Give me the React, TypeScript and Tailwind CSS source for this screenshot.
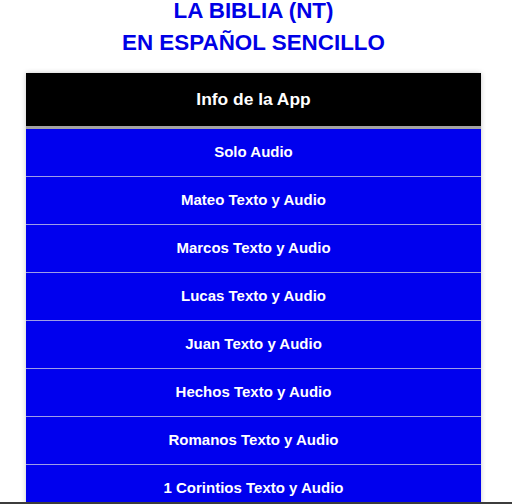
const items = [
  'Solo Audio',
  'Mateo Texto y Audio',
  'Marcos Texto y Audio',
  'Lucas Texto y Audio',
  'Juan Texto y Audio',
  'Hechos Texto y Audio',
  'Romanos Texto y Audio',
  '1 Corintios Texto y Audio',
  '2 Corintios Texto y Audio',
];

export default function App() {
  return (
    <div className="flex h-[504px] w-[512px] flex-col overflow-hidden bg-white font-['Liberation_Sans',Arial,sans-serif]">
      <div className="min-h-0 flex-1 overflow-hidden">
        <div className="w-[507px]">
          {/* título */}
          <h1 className="-mt-[5px] text-center text-[22.4px] font-bold leading-[32px] text-[#0000e6]">
            <div>LA BIBLIA (NT)</div>
            <div>EN ESPAÑOL SENCILLO</div>
          </h1>

          {/* menú */}
          <div className="mx-auto mt-[14px] w-[455px] shadow-[0_0_5px_rgba(0,0,0,0.22)]">
            <div className="flex h-[56px] items-center justify-center border-b-[3px] border-[#a3a3a3] bg-black text-[17.4px] font-bold text-white">
              Info de la App
            </div>
            {items.map((label) => (
              <div
                key={label}
                className="flex h-[48px] items-center justify-center border-b border-[#9d9de6] bg-[#0000ee] text-[15px] font-bold text-white"
              >
                {label}
              </div>
            ))}
          </div>
        </div>
      </div>
      <div className="h-[2px] bg-[#3c3c3c]" />
    </div>
  );
}
